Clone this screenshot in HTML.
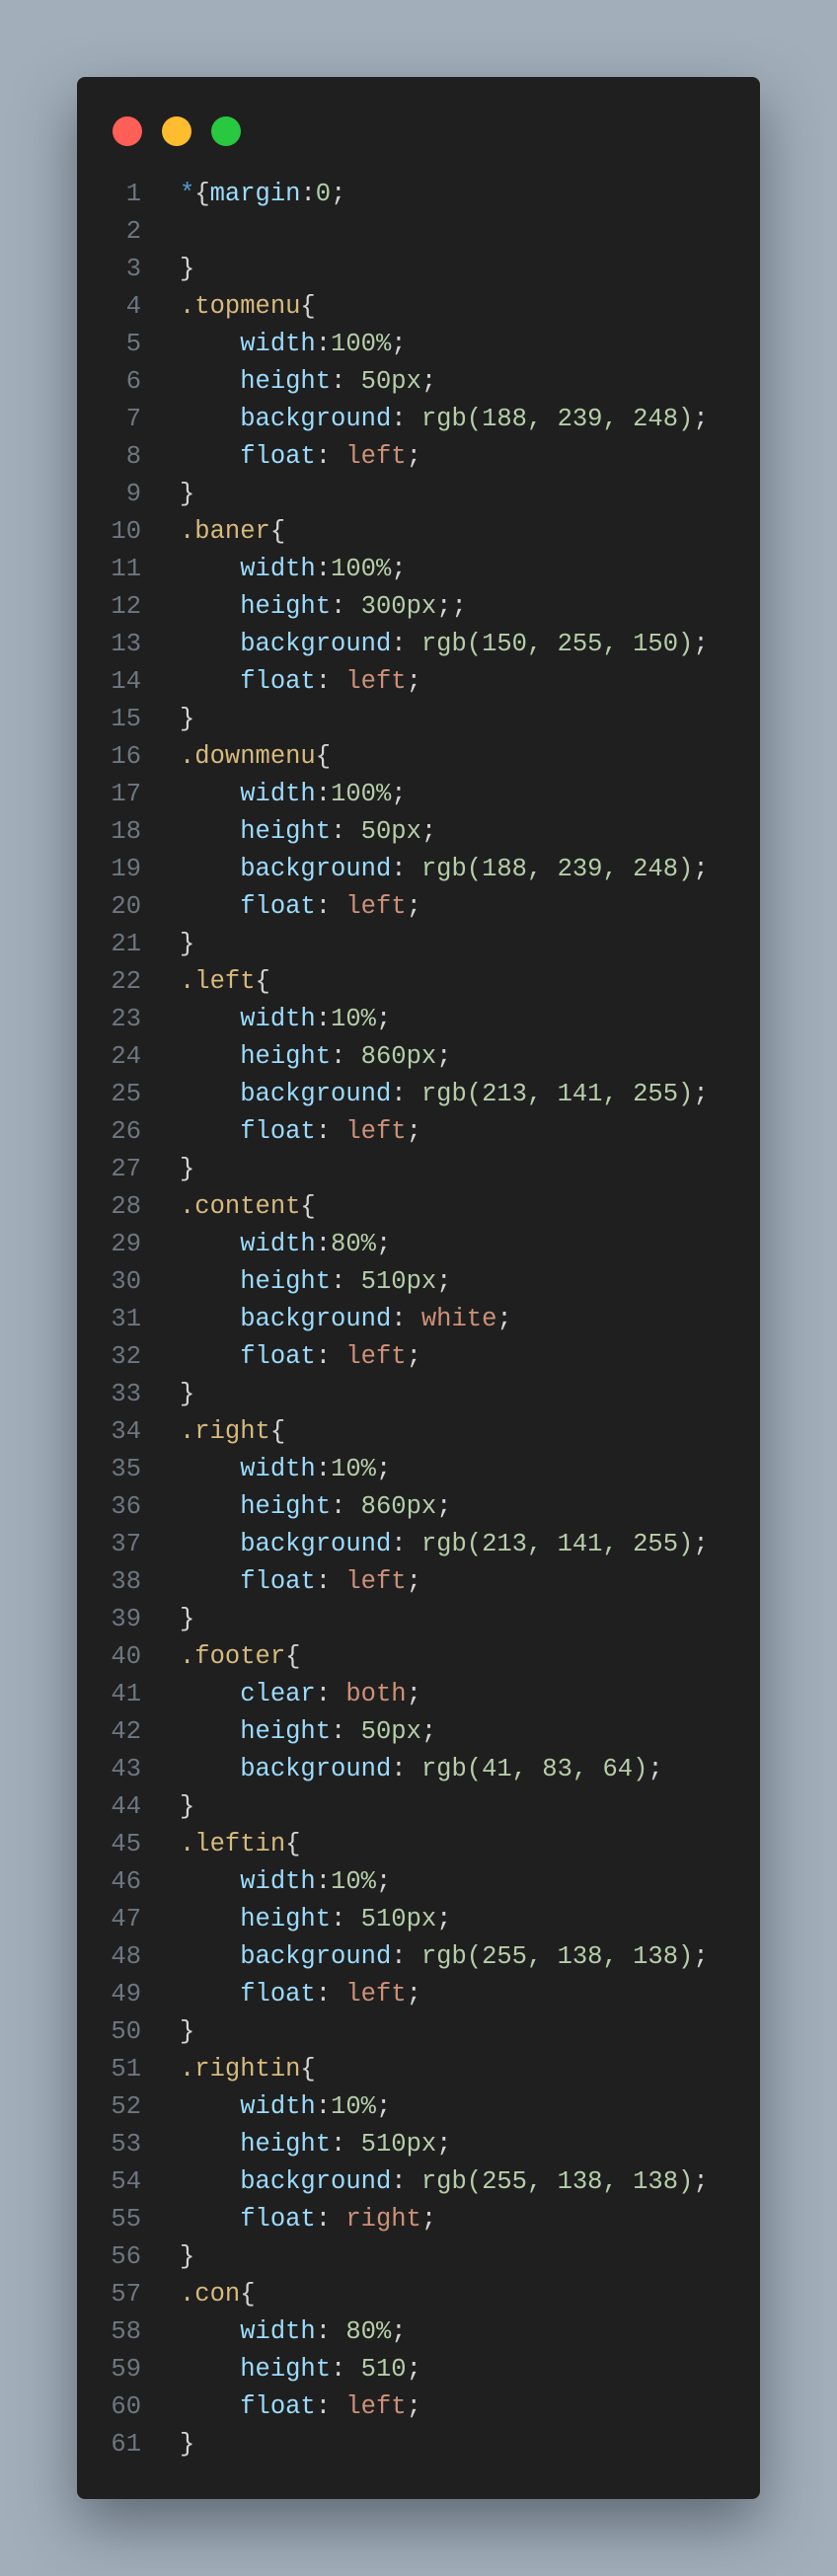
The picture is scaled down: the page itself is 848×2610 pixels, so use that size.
<!DOCTYPE html>
<html><head><meta charset="utf-8"><style>
html,body{margin:0;padding:0}
body{width:848px;height:2610px;background:#a2aeba;position:relative;overflow:hidden;font-family:"Liberation Mono","DejaVu Sans Mono",monospace}
.card{position:absolute;left:78px;top:78px;width:692px;height:2454px;background:#1f1f1f;border-radius:8px;box-shadow:0 25px 60px rgba(40,50,60,.55)}
.dot{position:absolute;top:118px;width:30px;height:30px;border-radius:50%}
.code{position:absolute;left:0;top:178px;font-size:25.5px;line-height:38px;white-space:pre;color:#d4d4d4}
.ln{display:inline-block;width:143px;text-align:right;color:#6e7681;margin-right:39px}
.p{color:#9cdcfe}.s{color:#d7ba7d}.n{color:#b5cea8}.k{color:#ce9178}.a{color:#569cd6}
</style></head><body>
<div class="card"></div>
<div class="dot" style="left:114px;background:#ff5f57"></div>
<div class="dot" style="left:164px;background:#febc2e"></div>
<div class="dot" style="left:214px;background:#28c840"></div>
<div class="code"><span class="ln">1</span><span class="a">*</span>{<span class="p">margin</span>:<span class="n">0</span>;
<span class="ln">2</span>
<span class="ln">3</span>}
<span class="ln">4</span><span class="s">.topmenu</span>{
<span class="ln">5</span>    <span class="p">width</span>:<span class="n">100%</span>;
<span class="ln">6</span>    <span class="p">height</span>: <span class="n">50px</span>;
<span class="ln">7</span>    <span class="p">background</span>: <span class="n">rgb(188, 239, 248)</span>;
<span class="ln">8</span>    <span class="p">float</span>: <span class="k">left</span>;
<span class="ln">9</span>}
<span class="ln">10</span><span class="s">.baner</span>{
<span class="ln">11</span>    <span class="p">width</span>:<span class="n">100%</span>;
<span class="ln">12</span>    <span class="p">height</span>: <span class="n">300px</span>;;
<span class="ln">13</span>    <span class="p">background</span>: <span class="n">rgb(150, 255, 150)</span>;
<span class="ln">14</span>    <span class="p">float</span>: <span class="k">left</span>;
<span class="ln">15</span>}
<span class="ln">16</span><span class="s">.downmenu</span>{
<span class="ln">17</span>    <span class="p">width</span>:<span class="n">100%</span>;
<span class="ln">18</span>    <span class="p">height</span>: <span class="n">50px</span>;
<span class="ln">19</span>    <span class="p">background</span>: <span class="n">rgb(188, 239, 248)</span>;
<span class="ln">20</span>    <span class="p">float</span>: <span class="k">left</span>;
<span class="ln">21</span>}
<span class="ln">22</span><span class="s">.left</span>{
<span class="ln">23</span>    <span class="p">width</span>:<span class="n">10%</span>;
<span class="ln">24</span>    <span class="p">height</span>: <span class="n">860px</span>;
<span class="ln">25</span>    <span class="p">background</span>: <span class="n">rgb(213, 141, 255)</span>;
<span class="ln">26</span>    <span class="p">float</span>: <span class="k">left</span>;
<span class="ln">27</span>}
<span class="ln">28</span><span class="s">.content</span>{
<span class="ln">29</span>    <span class="p">width</span>:<span class="n">80%</span>;
<span class="ln">30</span>    <span class="p">height</span>: <span class="n">510px</span>;
<span class="ln">31</span>    <span class="p">background</span>: <span class="k">white</span>;
<span class="ln">32</span>    <span class="p">float</span>: <span class="k">left</span>;
<span class="ln">33</span>}
<span class="ln">34</span><span class="s">.right</span>{
<span class="ln">35</span>    <span class="p">width</span>:<span class="n">10%</span>;
<span class="ln">36</span>    <span class="p">height</span>: <span class="n">860px</span>;
<span class="ln">37</span>    <span class="p">background</span>: <span class="n">rgb(213, 141, 255)</span>;
<span class="ln">38</span>    <span class="p">float</span>: <span class="k">left</span>;
<span class="ln">39</span>}
<span class="ln">40</span><span class="s">.footer</span>{
<span class="ln">41</span>    <span class="p">clear</span>: <span class="k">both</span>;
<span class="ln">42</span>    <span class="p">height</span>: <span class="n">50px</span>;
<span class="ln">43</span>    <span class="p">background</span>: <span class="n">rgb(41, 83, 64)</span>;
<span class="ln">44</span>}
<span class="ln">45</span><span class="s">.leftin</span>{
<span class="ln">46</span>    <span class="p">width</span>:<span class="n">10%</span>;
<span class="ln">47</span>    <span class="p">height</span>: <span class="n">510px</span>;
<span class="ln">48</span>    <span class="p">background</span>: <span class="n">rgb(255, 138, 138)</span>;
<span class="ln">49</span>    <span class="p">float</span>: <span class="k">left</span>;
<span class="ln">50</span>}
<span class="ln">51</span><span class="s">.rightin</span>{
<span class="ln">52</span>    <span class="p">width</span>:<span class="n">10%</span>;
<span class="ln">53</span>    <span class="p">height</span>: <span class="n">510px</span>;
<span class="ln">54</span>    <span class="p">background</span>: <span class="n">rgb(255, 138, 138)</span>;
<span class="ln">55</span>    <span class="p">float</span>: <span class="k">right</span>;
<span class="ln">56</span>}
<span class="ln">57</span><span class="s">.con</span>{
<span class="ln">58</span>    <span class="p">width</span>: <span class="n">80%</span>;
<span class="ln">59</span>    <span class="p">height</span>: <span class="n">510</span>;
<span class="ln">60</span>    <span class="p">float</span>: <span class="k">left</span>;
<span class="ln">61</span>}</div>
</body></html>
